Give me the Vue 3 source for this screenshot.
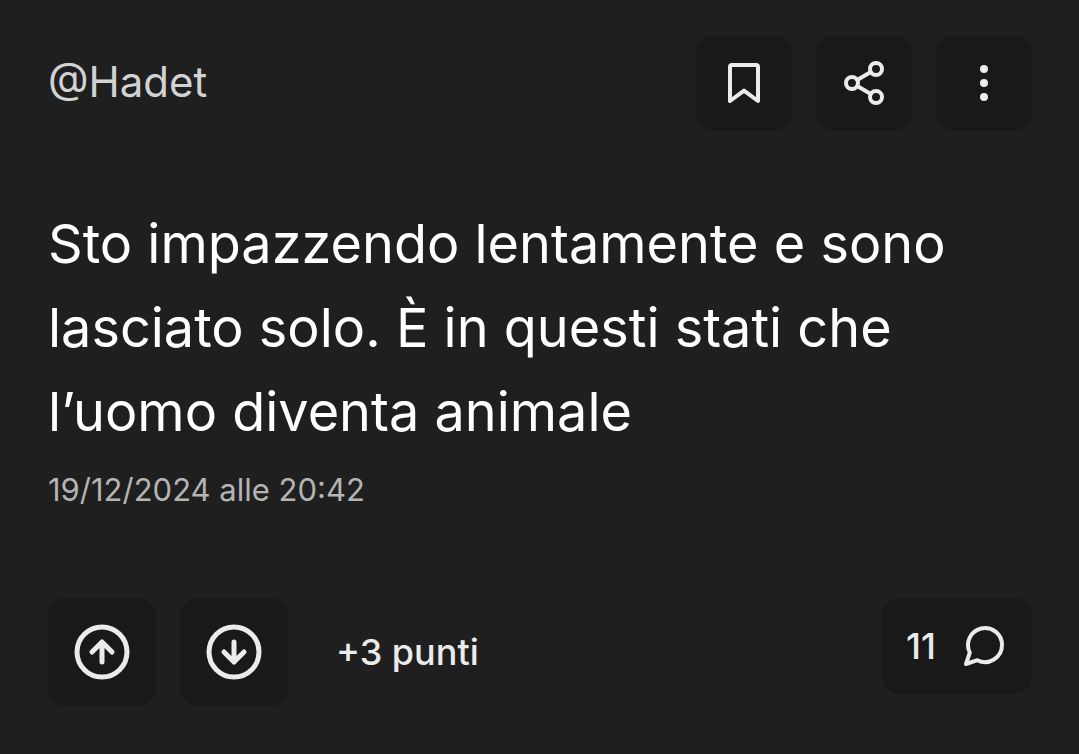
<script setup>
const handle = '@Hadet'
const body = 'Sto impazzendo lentamente e sono lasciato solo. È in questi stati che l’uomo diventa animale'
const date = '19/12/2024 alle 20:42'
const points = '+3 punti'
const comments = 11
</script>

<template>
  <article class="post">
    <header class="top">
      <a class="handle" href="#">{{ handle }}</a>
      <div class="actions">
        <button class="tile small" type="button" aria-label="Salva">
          <svg class="icon" width="48" height="48" viewBox="0 0 24 24"><path d="M19 21l-7-5.2L5 21V4a1 1 0 0 1 1-1h12a1 1 0 0 1 1 1z" /></svg>
        </button>
        <button class="tile small" type="button" aria-label="Condividi">
          <svg class="icon" width="48" height="48" viewBox="0 0 24 24">
            <circle cx="18" cy="5" r="3" /><circle cx="6" cy="12" r="3" /><circle cx="18" cy="19" r="3" />
            <path d="M8.6 13.5l6.8 4M15.4 6.5l-6.8 4" />
          </svg>
        </button>
        <button class="tile small" type="button" aria-label="Altro">
          <svg class="icon" width="48" height="48" viewBox="0 0 24 24">
            <circle cx="12" cy="5" r="1" /><circle cx="12" cy="12" r="1" /><circle cx="12" cy="19" r="1" />
          </svg>
        </button>
      </div>
    </header>
    <p class="body">{{ body }}</p>
    <time class="date" datetime="2024-12-19T20:42">{{ date }}</time>
    <footer class="bottom">
      <div class="votes">
        <button class="tile large" type="button" aria-label="Vota a favore">
          <svg class="icon" width="60" height="60" viewBox="0 0 24 24"><circle cx="12" cy="12" r="10" /><path d="M12 16V8M8 12l4-4 4 4" /></svg>
        </button>
        <button class="tile large" type="button" aria-label="Vota contro">
          <svg class="icon" width="60" height="60" viewBox="0 0 24 24"><circle cx="12" cy="12" r="10" /><path d="M12 8v8M8 12l4 4 4-4" /></svg>
        </button>
        <span class="points">{{ points }}</span>
      </div>
      <button class="tile comments" type="button" aria-label="11 commenti">
        <span>{{ comments }}</span>
        <svg class="icon" width="48" height="48" viewBox="0 0 24 24"><path d="M21 11.5A8.5 8.5 0 0 1 8.7 19.1L3 21l1.9-5.7A8.5 8.5 0 1 1 21 11.5z" /></svg>
      </button>
    </footer>
  </article>
</template>

<style>
body {
  margin: 0;
  background: #1f1f1f;
}
</style>

<style scoped>
.post {
  box-sizing: border-box;
  min-height: 100vh;
  padding: 35px 47px 48px 48px;
  background: #1f1f1f;
  color: #fff;
  font-family: Inter, "Liberation Sans", sans-serif;
}
.top,
.bottom,
.votes,
.actions {
  display: flex;
}
.top,
.bottom {
  justify-content: space-between;
}
.top {
  align-items: center;
}
.bottom {
  align-items: flex-start;
  margin-top: 84px;
}
.votes {
  align-items: center;
  gap: 24px;
}
.actions {
  gap: 24px;
}
.handle {
  padding-bottom: 2px;
  color: #d2d2d2;
  font-size: 42px;
  line-height: 60px;
  text-decoration: none;
}
.tile {
  display: flex;
  align-items: center;
  justify-content: center;
  padding: 0;
  border: 0;
  border-radius: 18px;
  background: #191919;
  color: #ebebeb;
  font: inherit;
  cursor: pointer;
}
.small {
  width: 96px;
  height: 96px;
}
.large {
  width: 108px;
  height: 108px;
}
.icon {
  fill: none;
  stroke: currentColor;
  stroke-width: 2;
  stroke-linecap: round;
  stroke-linejoin: round;
}
.body {
  margin: 71px 0 0;
  font-size: 54px;
  line-height: 84px;
}
.date {
  display: block;
  margin-top: 12px;
  color: #b4b4b4;
  font-size: 31px;
  line-height: 48px;
}
.points {
  margin-left: 24px;
  color: #ebebeb;
  font-size: 36px;
  font-weight: 500;
  line-height: 48px;
}
.comments {
  gap: 24px;
  height: 96px;
  padding: 0 24px;
  font-size: 36px;
  font-weight: 500;
}
</style>
